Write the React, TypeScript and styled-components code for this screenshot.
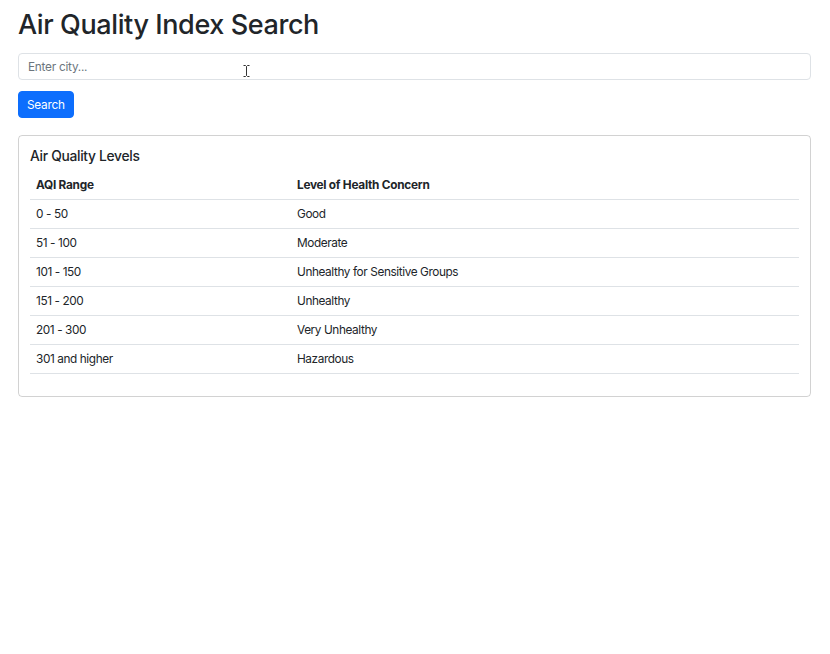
import React, { FC, useState } from "react"
import styled, { createGlobalStyle } from "styled-components"

const levels = [
  { range: '0 - 50', concern: 'Good' },
  { range: '51 - 100', concern: 'Moderate' },
  { range: '101 - 150', concern: 'Unhealthy for Sensitive Groups' },
  { range: '151 - 200', concern: 'Unhealthy' },
  { range: '201 - 300', concern: 'Very Unhealthy' },
  { range: '301 and higher', concern: 'Hazardous' },
]

const App: FC = () => {
  const [ city, setCity ] = useState('')

  return (
    <>
      <GlobalStyle />
      <Page>
        <Title>Air Quality Index Search</Title>
        <SearchForm onSubmit={e => e.preventDefault()}>
          <InputWrap>
            <CityInput
              type="text"
              placeholder="Enter city..."
              value={city}
              onChange={e => setCity(e.target.value)}
            />
            {/* mouse pointer caught in the screenshot */}
            <Cursor width="7" height="12" viewBox="0 0 7 12">
              <path d="M0.5 0.5h2l1 1 1-1h2M3.5 1.5v9M0.5 11.5h2l1-1 1 1h2" stroke="#333" strokeWidth="1" fill="none" />
            </Cursor>
          </InputWrap>
          <PrimaryButton type="submit">Search</PrimaryButton>
        </SearchForm>

        <Card>
          <CardTitle>Air Quality Levels</CardTitle>
          <Table>
            <thead>
              <tr>
                <Th $width="261px">AQI Range</Th>
                <Th>Level of Health Concern</Th>
              </tr>
            </thead>
            <tbody>
              {levels.map(l => (
                <tr key={l.range}>
                  <Td>{l.range}</Td>
                  <Td>{l.concern}</Td>
                </tr>
              ))}
            </tbody>
          </Table>
        </Card>
      </Page>
    </>
  )
}

const GlobalStyle = createGlobalStyle`
  * { box-sizing: border-box; }
  body {
    margin: 0;
    background: #fff;
    color: #212529;
    font-family: Inter, "Noto Sans", "Liberation Sans", sans-serif;
  }
`

const Page = styled.div`
  padding: 7px 19px 18px 18px;
`

const Title = styled.h1`
  margin: 0 0 10px 0;
  font-size: 27px;
  font-weight: 500;
  line-height: 36px;
  letter-spacing: -0.4px;
`

const SearchForm = styled.form`
  display: flex;
  flex-direction: column;
  align-items: flex-start;
  gap: 11px;
  margin-bottom: 17px;
`

const InputWrap = styled.div`
  position: relative;
  width: 100%;
`

const CityInput = styled.input`
  display: block;
  width: 100%;
  height: 27px;
  padding: 0 9px;
  font: inherit;
  font-size: 11.8px;
  letter-spacing: -0.25px;
  color: #212529;
  border: 1px solid #dee2e6;
  border-radius: 4px;
  outline: none;

  &::placeholder {
    color: #6c757d;
  }
`

const Cursor = styled.svg`
  position: absolute;
  left: 225px;
  top: 12px;
  pointer-events: none;
`

const PrimaryButton = styled.button`
  height: 27px;
  padding: 0 8px;
  font: inherit;
  font-size: 11.8px;
  letter-spacing: -0.25px;
  color: #fff;
  background: #0d6efd;
  border: 1px solid #0d6efd;
  border-radius: 4px;
  cursor: pointer;
`

const Card = styled.section`
  border: 1px solid rgba(0, 0, 0, 0.175);
  border-radius: 4px;
  padding: 11px 11px 22px 11px;
`

const CardTitle = styled.h5`
  margin: 0 0 6px 0;
  font-size: 13.8px;
  font-weight: 500;
  line-height: 18px;
  letter-spacing: -0.3px;
`

const Table = styled.table`
  width: 100%;
  border-collapse: collapse;
  font-size: 11.8px;
  line-height: 16px;
`

const Th = styled.th<{ $width?: string }>`
  width: ${p => p.$width ?? 'auto'};
  text-align: left;
  font-weight: 700;
  letter-spacing: -0.25px;
  padding: 6px 6px;
  border-bottom: 1px solid #dee2e6;
`

const Td = styled.td`
  padding: 6px 6px;
  letter-spacing: -0.4px;
  border-bottom: 1px solid #dee2e6;
`

export default App
